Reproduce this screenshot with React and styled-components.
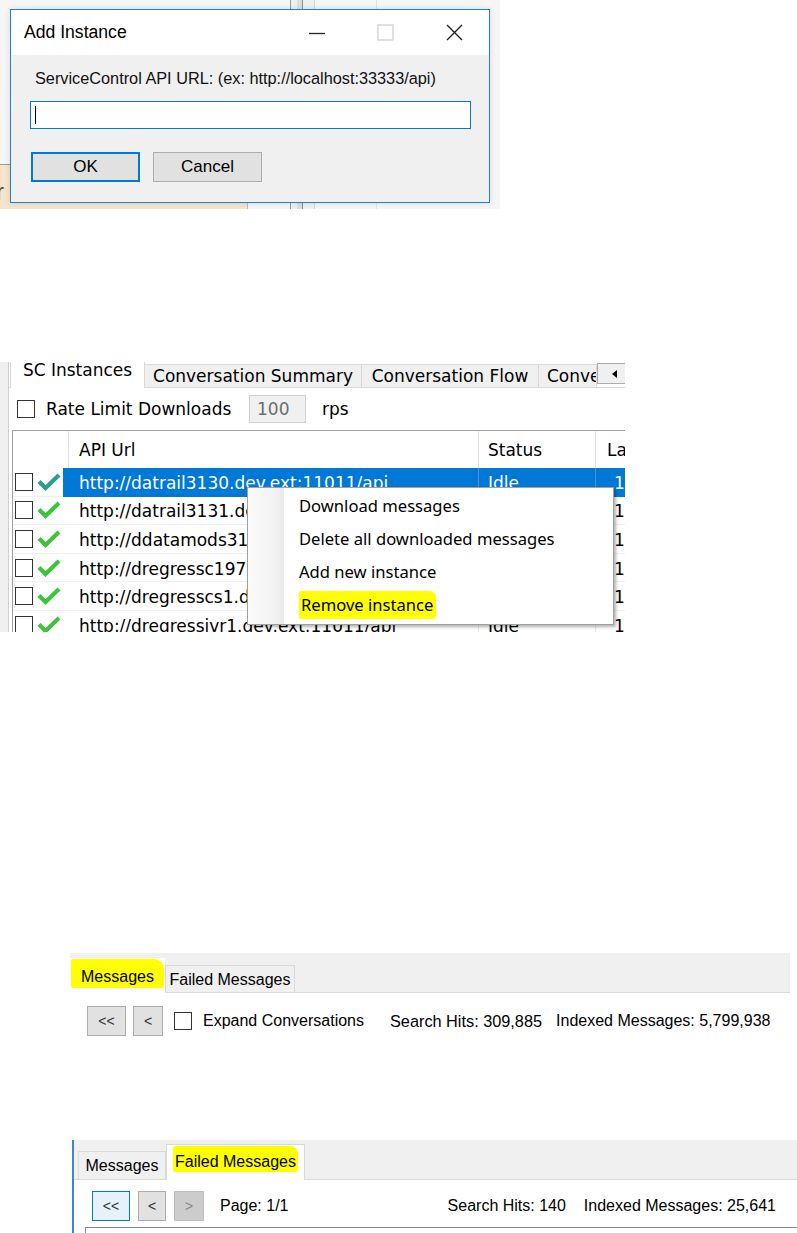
import React from "react";
import styled, { createGlobalStyle } from "styled-components";

const Global = createGlobalStyle`
  html, body { margin: 0; padding: 0; background: #ffffff; }
  body { width: 797px; height: 1233px; overflow: hidden; }
  * { box-sizing: border-box; }
`;

const UI = `"Liberation Sans", Arial, sans-serif`;
const VERD = `"DejaVu Sans", Verdana, sans-serif`;
const SEGOE = `"Noto Sans", "Open Sans", sans-serif`;

const Page = styled.main`
  display: flex;
  flex-direction: column;
  align-items: flex-start;
  width: 797px;
  height: 1233px;
  background: #ffffff;
`;

const Shot = styled.section`
  position: relative;
  flex: none;
  width: ${(p) => p.$w}px;
  height: ${(p) => p.$h}px;
  margin-top: ${(p) => p.$top}px;
  margin-left: ${(p) => p.$left}px;
  overflow: hidden;
`;

/* ---------------- Shot 1 : Add Instance dialog ---------------- */

const Backdrop = styled.div`
  display: flex;
  height: 100%;
  background: #f6f6f6;
`;

const BackLeft = styled.div`
  width: 290px;
  display: flex;
  flex-direction: column;
`;

const BackFill = styled.div`
  flex: 1;
  background: #f6f6f6;
`;

const BackFooter = styled.div`
  height: 45px;
  display: flex;
`;

const PeachPanel = styled.div`
  width: 248px;
  background: #f6e4cb;
  border-top: 1px solid #9c9c9c;
  border-right: 1px solid #c9b9a0;
  font-family: ${UI};
  font-size: 24px;
  color: #4a4a4a;
  padding-top: 14px;
  text-indent: -4px;
  line-height: 26px;
`;

const ScrollCol = styled.div`
  width: 25px;
  display: flex;
  border-left: 1px solid #9a9a9a;
  border-right: 1px solid #d4d4d4;
  background: #f0f0f0;
`;

const ScrollThumb = styled.div`
  width: 6px;
  margin-left: 6px;
  background: #dedede;
  border-right: 1px solid #8d8d8d;
`;

const BackRest = styled.div`
  flex: 1;
  display: flex;
`;

const BackGap = styled.div`
  width: 62px;
  border-right: 1px solid #e2e2e2;
`;

const Dialog = styled.div`
  position: absolute;
  left: 10px;
  top: 9px;
  width: 480px;
  height: 194px;
  border: 1px solid #1883d7;
  background: #f0f0f0;
  display: flex;
  flex-direction: column;
  box-shadow: 0 0 6px rgba(0, 0, 0, 0.12);
  font-family: ${UI};
`;

const TitleBar = styled.div`
  height: 45px;
  background: #ffffff;
  display: flex;
  align-items: center;
  padding-left: 13px;
`;

const TitleText = styled.div`
  flex: 1;
  font-size: 17.6px;
  color: #000;
`;

const CaptionButton = styled.div`
  width: 69px;
  height: 45px;
  display: flex;
  align-items: center;
  justify-content: center;
`;

const DialogBody = styled.div`
  flex: 1;
  display: flex;
  flex-direction: column;
  padding: 9px 0 0 19px;
`;

const FieldLabel = styled.div`
  height: 28px;
  line-height: 28px;
  padding-left: 5px;
  font-size: 16.3px;
  color: #111;
  white-space: nowrap;
`;

const UrlInput = styled.div`
  margin-top: 9px;
  width: 441px;
  height: 28px;
  background: #ffffff;
  border: 1px solid #0078d7;
  display: flex;
  align-items: center;
  padding-left: 4px;
`;

const Caret = styled.div`
  width: 1px;
  height: 18px;
  background: #000;
`;

const ButtonRow = styled.div`
  margin-top: 23px;
  margin-left: 1px;
  display: flex;
  gap: 13px;
`;

const DialogButton = styled.div`
  width: 109px;
  height: 30px;
  display: flex;
  align-items: center;
  justify-content: center;
  background: #e1e1e1;
  border: ${(p) => (p.$default ? "2px solid #0078d7" : "1px solid #adadad")};
  font-size: 17px;
  color: #000;
`;

/* ---------------- Shot 2 : SC Instances ---------------- */

const Frame2 = styled.div`
  display: flex;
  height: 100%;
  font-family: ${VERD};
  font-size: 17px;
  color: #000;
`;

const SideStrip = styled.div`
  width: 9px;
  background: #f0f0f0;
  border-right: 1px solid #d0d0d0;
  flex: none;
`;

const TabArea = styled.div`
  flex: 1;
  display: flex;
  flex-direction: column;
  min-width: 0;
`;

const VTabStrip = styled.div`
  height: 26px;
  display: flex;
  align-items: flex-end;
  padding-left: 1px;
  border-bottom: 1px solid #d9d9d9;
  flex: none;
`;

const VTab = styled.div`
  flex: none;
  width: ${(p) => p.$w}px;
  height: ${(p) => (p.$active ? 27 : 23)}px;
  margin-bottom: ${(p) => (p.$active ? -1 : 0)}px;
  background: ${(p) => (p.$active ? "#ffffff" : "#f0f0f0")};
  border: 1px solid #d9d9d9;
  border-top: ${(p) => (p.$active ? "none" : "1px solid #d9d9d9")};
  border-bottom: none;
  margin-left: ${(p) => (p.$active ? 0 : -1)}px;
  display: flex;
  align-items: ${(p) => (p.$active ? "flex-start" : "center")};
  justify-content: ${(p) => (p.$clip ? "flex-start" : "center")};
  padding-left: ${(p) => (p.$clip ? 8 : 0)}px;
  overflow: hidden;
  white-space: nowrap;
  line-height: 18px;
  padding-top: 0;
  margin-top: ${(p) => (p.$active ? -2 : 0)}px;
`;

const TabScroll = styled.div`
  flex: none;
  width: 30px;
  height: 21px;
  margin-bottom: 3px;
  border: 1px solid #acacac;
  background: #f0f0f0;
  display: flex;
  align-items: center;
  padding-left: 14px;
`;

const Triangle = styled.div`
  width: 0;
  height: 0;
  border-top: 4px solid transparent;
  border-bottom: 4px solid transparent;
  border-right: 5px solid #000;
`;

const RateRow = styled.div`
  margin-top: 7px;
  height: 28px;
  display: flex;
  align-items: center;
  padding-left: 8px;
  flex: none;
`;

const Box = styled.div`
  flex: none;
  width: ${(p) => p.$size || 18}px;
  height: ${(p) => p.$size || 18}px;
  border: 1px solid #333333;
  background: #ffffff;
`;

const RateLabel = styled.span`
  margin-left: 11px;
  width: 203px;
`;

const RateInput = styled.div`
  width: 57px;
  height: 28px;
  background: #f0f0f0;
  border: 1px solid #d0d0d0;
  color: #6d6d6d;
  display: flex;
  align-items: center;
  padding-left: 7px;
`;

const Unit = styled.span`
  margin-left: 16px;
`;

const Table = styled.div`
  margin-top: 7px;
  margin-left: 3px;
  border-top: 1px solid #a0a0a0;
  border-left: 1px solid #a0a0a0;
  flex: 1;
  display: flex;
  flex-direction: column;
  width: 700px;
`;

const HeaderRow = styled.div`
  height: 37px;
  display: grid;
  grid-template-columns: 56px 410px 117px 1fr;
  flex: none;
`;

const HeaderCell = styled.div`
  border-right: 1px solid #e5e5e5;
  display: flex;
  align-items: center;
  padding-left: ${(p) => p.$pad || 9}px;
  white-space: nowrap;
`;

const BodyRow = styled.div`
  height: 28.6px;
  display: grid;
  grid-template-columns: 50px 416px 117px 1fr;
  flex: none;
`;

const Cell = styled.div`
  display: flex;
  align-items: center;
  white-space: nowrap;
  overflow: hidden;
  padding-left: ${(p) => p.$pad || 0}px;
  padding-top: 2px;
  background: ${(p) => (p.$sel ? "#0078d7" : "#ffffff")};
  color: ${(p) => (p.$sel ? "#ffffff" : "#000000")};
  border-bottom: 1px solid ${(p) => (p.$sel ? "#0078d7" : "#f0f0f0")};
  border-right: ${(p) => (p.$line ? `1px solid ${p.$sel ? "#3d97e0" : "#e8e8e8"}` : "none")};
`;

const IconCell = styled.div`
  display: flex;
  align-items: center;
  padding-left: 2px;
  gap: 4px;
  border-bottom: 1px solid #f0f0f0;
`;

const Menu = styled.div`
  position: absolute;
  left: 247px;
  top: 125px;
  width: 367px;
  height: 138px;
  background: #ffffff;
  border: 1px solid #a0a0a0;
  box-shadow: 2px 2px 3px rgba(0, 0, 0, 0.3);
  display: flex;
  font-family: ${SEGOE};
  font-size: 16.6px;
  color: #000;
`;

const MenuGutter = styled.div`
  width: 36px;
  background: linear-gradient(to right, #fbfbfb 0%, #f3f3f3 70%, #e9e9e9 100%);
  flex: none;
`;

const MenuList = styled.div`
  flex: 1;
  padding-top: 1px;
  display: flex;
  flex-direction: column;
`;

const MenuItem = styled.div`
  height: 33px;
  display: flex;
  align-items: center;
  padding-left: 15px;
`;

const Highlight = styled.span`
  background: #ffff00;
  padding: ${(p) => p.$pad || "1px 3px"};
  border-radius: 2px 6px 3px 2px;
`;

/* ---------------- Shot 3 / 4 : Messages tabs ---------------- */

const Frame = styled.div`
  display: flex;
  flex-direction: column;
  height: 100%;
  font-family: ${UI};
  font-size: 16px;
  color: #000;
  border-left: ${(p) => (p.$accent ? "2px solid #3b86d6" : "none")};
`;

const MTabStrip = styled.div`
  height: 40px;
  flex: none;
  background: #f0f0f0;
  border-bottom: 1px solid #dadada;
  display: flex;
  align-items: flex-end;
  padding-left: ${(p) => p.$pad || 0}px;
`;

const MTab = styled.div`
  flex: none;
  width: ${(p) => p.$w}px;
  height: ${(p) => p.$h}px;
  margin-bottom: ${(p) => (p.$active ? -1 : 0)}px;
  background: ${(p) => (p.$active ? "#ffffff" : "#f0f0f0")};
  border: 1px solid ${(p) => (p.$bare ? "transparent" : "#d9d9d9")};
  border-bottom: none;
  display: flex;
  align-items: ${(p) => (p.$top ? "flex-start" : "center")};
  justify-content: center;
  white-space: nowrap;
  padding-top: ${(p) => (p.$top ? 0 : 1)}px;
`;

const TabMark = styled.div`
  background: #ffff00;
  display: flex;
  align-items: center;
  justify-content: center;
  width: ${(p) => p.$w}px;
  height: ${(p) => p.$h}px;
  margin-top: ${(p) => p.$mt || 0}px;
  padding-top: ${(p) => p.$pt || 0}px;
  border-radius: ${(p) => p.$radius || "2px 10px 3px 2px"};
`;

const ControlRow = styled.div`
  display: flex;
  align-items: center;
  height: 30px;
  flex: none;
  margin-top: ${(p) => p.$mt}px;
  padding-left: ${(p) => p.$pl}px;
  padding-right: ${(p) => p.$pr || 0}px;
`;

const NavButton = styled.div`
  flex: none;
  width: ${(p) => p.$w}px;
  height: 30px;
  margin-right: ${(p) => p.$gap || 0}px;
  display: flex;
  align-items: center;
  justify-content: center;
  font-size: 14px;
  background: ${(p) => (p.$focus ? "#e5f1fb" : p.$off ? "#cccccc" : "#e1e1e1")};
  border: 1px solid ${(p) => (p.$focus ? "#0078d7" : p.$off ? "#bfbfbf" : "#adadad")};
  color: ${(p) => (p.$off ? "#8a8a8a" : "#333")};
`;

const Spaced = styled.span`
  margin-left: ${(p) => p.$ml || 0}px;
  white-space: nowrap;
  font-size: ${(p) => p.$fs || 16}px;
`;

const Stats = styled.div`
  margin-left: auto;
  display: flex;
  gap: 18px;
  font-size: 16px;
`;

const Panel4 = styled.div`
  flex: 1;
  display: flex;
  flex-direction: column;
  background: #ffffff;
`;

const GridBox = styled.div`
  margin-top: 6px;
  margin-left: 11px;
  flex: 1;
  border-top: 1px solid #8a8a8a;
  border-left: 1px solid #8a8a8a;
`;

/* ---------------- icons ---------------- */

const CheckMark = ({ color }) => (
  <svg width="24" height="18" viewBox="0 0 24 18" aria-hidden="true">
    <polyline points="2,8.5 8.5,15 22,2" fill="none" stroke={color} strokeWidth="4.2" />
  </svg>
);

const MinIcon = () => (
  <svg width="18" height="18" viewBox="0 0 18 18" aria-hidden="true">
    <line x1="1" y1="9.5" x2="17" y2="9.5" stroke="#222" strokeWidth="1.3" />
  </svg>
);

const MaxIcon = () => (
  <svg width="17" height="17" viewBox="0 0 17 17" aria-hidden="true">
    <rect x="1" y="1" width="15" height="15" fill="none" stroke="#cccccc" strokeWidth="1.2" />
  </svg>
);

const CloseIcon = () => (
  <svg width="17" height="17" viewBox="0 0 17 17" aria-hidden="true">
    <path d="M1 1 L16 16 M16 1 L1 16" stroke="#222" strokeWidth="1.4" />
  </svg>
);

const rows = [
  { url: "http://datrail3130.dev.ext:11011/api", sel: true },
  { url: "http://datrail3131.dev.ext:11011/api" },
  { url: "http://ddatamods3130.dev.ext:11011/api" },
  { url: "http://dregressc1970.dev.ext:11011/api" },
  { url: "http://dregresscs1.dev.ext:11011/api" },
  { url: "http://dregressivr1.dev.ext:11011/api" },
];

export default function App() {
  return (
    <Page>
      <Global />

      {/* Add Instance dialog */}
      <Shot $w={500} $h={209} $top={0} $left={0}>
        <Backdrop>
          <BackLeft>
            <BackFill />
            <BackFooter>
              <PeachPanel>r</PeachPanel>
              <BackFill />
            </BackFooter>
          </BackLeft>
          <ScrollCol>
            <ScrollThumb />
          </ScrollCol>
          <BackRest>
            <BackGap />
          </BackRest>
        </Backdrop>
        <Dialog>
          <TitleBar>
            <TitleText>Add Instance</TitleText>
            <CaptionButton><MinIcon /></CaptionButton>
            <CaptionButton><MaxIcon /></CaptionButton>
            <CaptionButton><CloseIcon /></CaptionButton>
          </TitleBar>
          <DialogBody>
            <FieldLabel>ServiceControl API URL: (ex: http://localhost:33333/api)</FieldLabel>
            <UrlInput><Caret /></UrlInput>
            <ButtonRow>
              <DialogButton $default>OK</DialogButton>
              <DialogButton>Cancel</DialogButton>
            </ButtonRow>
          </DialogBody>
        </Dialog>
      </Shot>

      {/* SC Instances with context menu */}
      <Shot $w={625} $h={270} $top={153} $left={0}>
        <Frame2>
          <SideStrip />
          <TabArea>
            <VTabStrip>
              <VTab $active $w={135}>SC Instances</VTab>
              <VTab $w={218}>Conversation Summary</VTab>
              <VTab $w={178}>Conversation Flow</VTab>
              <VTab $w={59} $clip>Conversation Timeline</VTab>
              <TabScroll><Triangle /></TabScroll>
            </VTabStrip>
            <RateRow>
              <Box />
              <RateLabel>Rate Limit Downloads</RateLabel>
              <RateInput>100</RateInput>
              <Unit>rps</Unit>
            </RateRow>
            <Table>
              <HeaderRow>
                <HeaderCell />
                <HeaderCell $pad={10}>API Url</HeaderCell>
                <HeaderCell>Status</HeaderCell>
                <HeaderCell $pad={11}>Last Download</HeaderCell>
              </HeaderRow>
              {rows.map((r) => (
                <BodyRow key={r.url}>
                  <IconCell>
                    <Box />
                    <CheckMark color={r.sel ? "#2f9c8c" : "#3cc43c"} />
                  </IconCell>
                  <Cell $sel={r.sel} $pad={16} $line>{r.url}</Cell>
                  <Cell $sel={r.sel} $pad={9} $line>Idle</Cell>
                  <Cell $sel={r.sel} $pad={18}>1 /1/0001 12:00:00 AM</Cell>
                </BodyRow>
              ))}
            </Table>
          </TabArea>
        </Frame2>
        <Menu>
          <MenuGutter />
          <MenuList>
            <MenuItem>Download messages</MenuItem>
            <MenuItem>Delete all downloaded messages</MenuItem>
            <MenuItem>Add new instance</MenuItem>
            <MenuItem><Highlight $pad="2px 3px 3px 2px">Remove instance</Highlight></MenuItem>
          </MenuList>
        </Menu>
      </Shot>

      {/* Messages tab */}
      <Shot $w={720} $h={92} $top={321} $left={70}>
        <Frame>
          <MTabStrip>
            <MTab $active $bare $top $w={95} $h={35}>
              <TabMark $w={95} $h={29} $pt={7}>Messages</TabMark>
            </MTab>
            <MTab $w={130} $h={27}>Failed Messages</MTab>
          </MTabStrip>
          <ControlRow $mt={13} $pl={17}>
            <NavButton $w={39} $gap={7}>&lt;&lt;</NavButton>
            <NavButton $w={30} $gap={11}>&lt;</NavButton>
            <Box $size={18} />
            <Spaced $ml={11}>Expand Conversations</Spaced>
            <Spaced $ml={26} $fs={16.3}>Search Hits: 309,885</Spaced>
            <Spaced $ml={14} $fs={16}>Indexed Messages: 5,799,938</Spaced>
          </ControlRow>
        </Frame>
      </Shot>

      {/* Failed Messages tab */}
      <Shot $w={725} $h={93} $top={95} $left={72}>
        <Frame $accent>
          <MTabStrip $pad={4}>
            <MTab $w={88} $h={28}>Messages</MTab>
            <MTab $active $top $w={139} $h={36}>
              <TabMark $w={125} $h={26} $mt={1} $pt={5} $radius="2px 8px 2px 2px">Failed Messages</TabMark>
            </MTab>
          </MTabStrip>
          <Panel4>
            <ControlRow $mt={11} $pl={18} $pr={21}>
              <NavButton $w={38} $gap={8} $focus>&lt;&lt;</NavButton>
              <NavButton $w={28} $gap={8}>&lt;</NavButton>
              <NavButton $w={30} $off>&gt;</NavButton>
              <Spaced $ml={16}>Page: 1/1</Spaced>
              <Stats>
                <span>Search Hits: 140</span>
                <span>Indexed Messages: 25,641</span>
              </Stats>
            </ControlRow>
            <GridBox />
          </Panel4>
        </Frame>
      </Shot>
    </Page>
  );
}
